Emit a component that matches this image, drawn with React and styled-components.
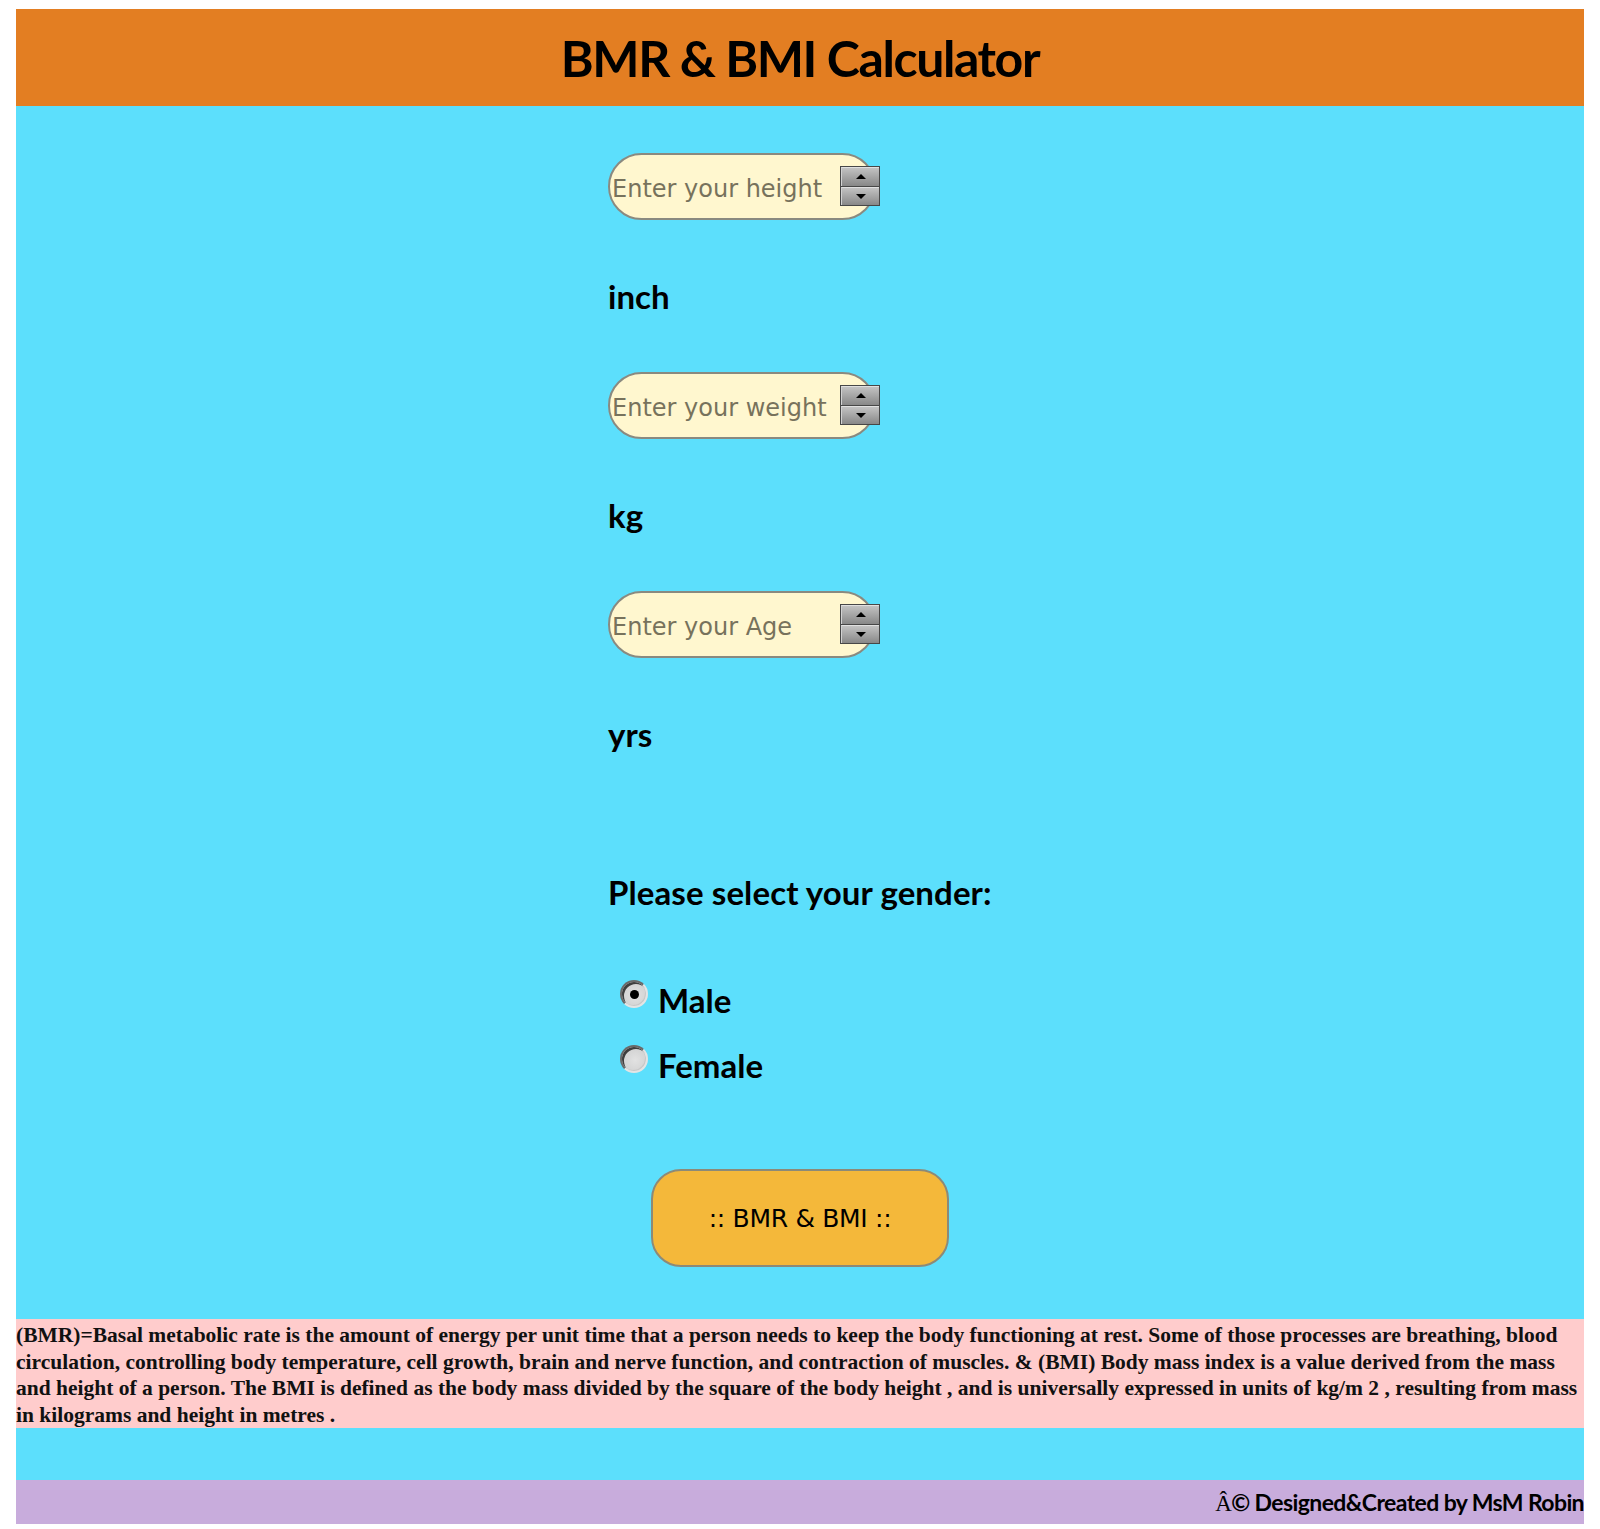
import React from 'react';
import styled, { createGlobalStyle } from 'styled-components';

const HUMANIST = `Lato, "Open Sans", "Liberation Sans", sans-serif`;

const Global = createGlobalStyle`
  html, body { margin: 0; padding: 0; background: #ffffff; }
  body { font-family: "Liberation Sans", Arial, sans-serif; }
`;

const Page = styled.div`
  padding: 9px 16px 5px;
`;

const Frame = styled.div`
  background: #5cdffc;
  display: flex;
  flex-direction: column;
`;

const Header = styled.header`
  background: #e37e22;
  height: 97px;
  display: flex;
  align-items: center;
  justify-content: center;
`;

const Title = styled.h1`
  margin: 0;
  font-family: ${HUMANIST};
  font-weight: 700;
  font-size: 50px;
  letter-spacing: -1.4px;
  line-height: 1;
  color: #000;
  white-space: nowrap;
`;

const Form = styled.form`
  width: 384px;
  margin: 47px auto 52px;
  display: flex;
  flex-direction: column;
`;

const Field = styled.div`
  position: relative;
  width: 268px;
  height: 67px;
`;

const Input = styled.input`
  box-sizing: border-box;
  width: 100%;
  height: 100%;
  margin: 0;
  border: 2px solid #8a8a80;
  border-radius: 34px;
  background: #fff7cf;
  padding: 5px 0 0 2px;
  font-family: "DejaVu Sans", sans-serif;
  font-size: 24px;
  color: #333;
  outline: none;
  &::placeholder {
    color: #77725c;
    opacity: 1;
  }
`;

const Spinner = styled.div`
  position: absolute;
  right: -4px;
  top: 13px;
  width: 40px;
  height: 40px;
  display: flex;
  flex-direction: column;
  border: 1px solid #474747;
  box-sizing: border-box;
  background: #474747;
  gap: 1px;
`;

const SpinBtn = styled.div`
  flex: 1;
  display: flex;
  align-items: center;
  justify-content: center;
  background: linear-gradient(#c2c2c2, #888888);
  border-top: 1px solid #e0e0e0;
  border-left: 1px solid #d2d2d2;
  &::after {
    content: '';
    width: 0;
    height: 0;
    border-left: 5px solid transparent;
    border-right: 5px solid transparent;
    ${(p) => (p.$down ? 'border-top: 5px solid #000;' : 'border-bottom: 5px solid #000;')}
  }
`;

const Unit = styled.div`
  margin: 56px 0;
  font-family: ${HUMANIST};
  font-weight: 700;
  font-size: 33px;
  line-height: 40px;
  color: #000;
`;

const GenderHeading = styled.div`
  margin: 62px 0 68px;
  font-family: ${HUMANIST};
  font-weight: 700;
  font-size: 33px;
  line-height: 40px;
  letter-spacing: 0.1px;
  white-space: nowrap;
  color: #000;
`;

const Option = styled.label`
  display: flex;
  align-items: flex-start;
  gap: 10px;
  padding-left: 12px;
  height: 40px;
  margin-bottom: ${(p) => (p.$last ? '0' : '25px')};
  font-family: ${HUMANIST};
  font-weight: 700;
  font-size: 33px;
  line-height: 40px;
  color: #000;
`;

const Radio = styled.input`
  appearance: none;
  -webkit-appearance: none;
  margin: 0;
  width: 28px;
  height: 28px;
  flex: none;
  border-radius: 50%;
  box-sizing: border-box;
  border: 2px solid;
  border-color: #6a6a6a #e4e4e4 #e4e4e4 #6a6a6a;
  background: radial-gradient(circle at 55% 55%, #e2e2e2 0%, #d4d4d4 60%, #bdbdbd 100%);
  box-shadow: inset 2px 2px 0 #3f3f3f, inset -1px -1px 0 #c8c8c8;
  display: grid;
  place-items: center;
  &:checked::after {
    content: '';
    width: 9px;
    height: 9px;
    border-radius: 50%;
    background: #000;
  }
`;

const Submit = styled.button`
  align-self: center;
  margin-top: 84px;
  width: 298px;
  height: 98px;
  box-sizing: border-box;
  border: 2px solid #8c8a78;
  border-radius: 30px;
  background: #f4b83a;
  font-family: "DejaVu Sans", sans-serif;
  font-size: 25px;
  letter-spacing: -0.3px;
  color: #000;
  cursor: pointer;
`;

const Info = styled.p`
  margin: 0 0 52px;
  padding: 3px 0 0;
  background: #ffcccc;
  font-family: "Liberation Serif", "Times New Roman", serif;
  font-weight: 700;
  font-size: 21.5px;
  line-height: 26.5px;
  color: #111;
`;

const Footer = styled.footer`
  background: #c8acdc;
  height: 44px;
  line-height: 44px;
  text-align: right;
  font-family: ${HUMANIST};
  font-weight: 700;
  font-size: 23px;
  letter-spacing: -0.6px;
  color: #000;
  white-space: nowrap;
`;

const SerifGlyph = styled.span`
  font-family: "Liberation Serif", serif;
  font-weight: 400;
`;

function NumberField({ placeholder }) {
  return (
    <Field>
      <Input type="text" placeholder={placeholder} />
      <Spinner>
        <SpinBtn />
        <SpinBtn $down />
      </Spinner>
    </Field>
  );
}

export default function App() {
  return (
    <Page>
      <Global />
      <Frame>
        <Header>
          <Title>BMR &amp; BMI Calculator</Title>
        </Header>
        <Form onSubmit={(e) => e.preventDefault()}>
          <NumberField placeholder="Enter your height" />
          <Unit>inch</Unit>
          <NumberField placeholder="Enter your weight" />
          <Unit>kg</Unit>
          <NumberField placeholder="Enter your Age" />
          <Unit>yrs</Unit>
          <GenderHeading>Please select your gender:</GenderHeading>
          <Option>
            <Radio type="radio" name="gender" defaultChecked />
            Male
          </Option>
          <Option $last>
            <Radio type="radio" name="gender" />
            Female
          </Option>
          <Submit type="submit">:: BMR &amp; BMI ::</Submit>
        </Form>
        <Info>
          (BMR)=Basal metabolic rate is the amount of energy per unit time that a person needs to keep the body
          functioning at rest. Some of those processes are breathing, blood circulation, controlling body temperature,
          cell growth, brain and nerve function, and contraction of muscles. &amp; (BMI) Body mass index is a value
          derived from the mass and height of a person. The BMI is defined as the body mass divided by the square of
          the body height , and is universally expressed in units of kg/m 2 , resulting from mass in kilograms and
          height in metres .
        </Info>
        <Footer>
          <SerifGlyph>Â</SerifGlyph>© Designed&amp;Created by MsM Robin
        </Footer>
      </Frame>
    </Page>
  );
}
